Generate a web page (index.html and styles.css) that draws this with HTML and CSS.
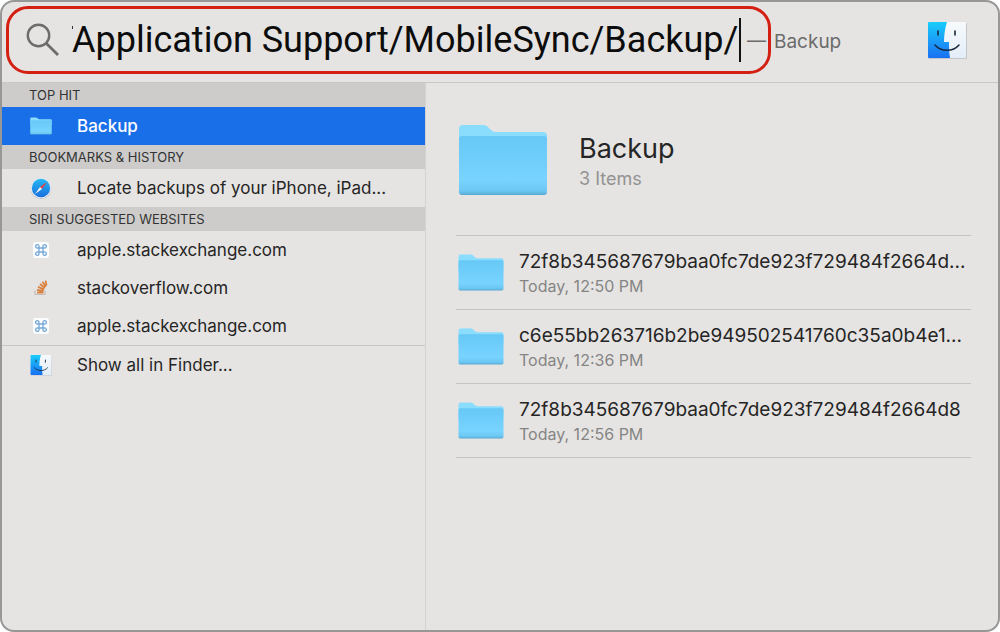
FILE: index.html
```
<!DOCTYPE html>
<html lang="en">
<head>
    <meta charset="utf-8">
    <meta name="viewport" content="width=device-width, initial-scale=1">
    <title>Spotlight</title>
    <link rel="stylesheet" href="styles.css">
</head>
<body>
    <!-- shared icons -->
    <svg class="defs" aria-hidden="true">
        <defs>
            <linearGradient id="folderFront" x1="0" y1="0" x2="0" y2="1">
                <stop offset="0" stop-color="#67c8f6"/>
                <stop offset="0.75" stop-color="#78d3ff"/>
                <stop offset="0.93" stop-color="#6cc7f3"/>
                <stop offset="1" stop-color="#58a9d2"/>
            </linearGradient>
            <linearGradient id="finderBlue" x1="0" y1="0" x2="0" y2="1">
                <stop offset="0" stop-color="#19cdfb"/>
                <stop offset="1" stop-color="#1a70f3"/>
            </linearGradient>
            <linearGradient id="finderWhite" x1="0" y1="0" x2="0" y2="1">
                <stop offset="0" stop-color="#f8fafc"/>
                <stop offset="1" stop-color="#e3edf8"/>
            </linearGradient>
            <linearGradient id="safariBlue" x1="0" y1="0" x2="0" y2="1">
                <stop offset="0" stop-color="#24b8f5"/>
                <stop offset="1" stop-color="#1b6fdd"/>
            </linearGradient>
        </defs>
        <symbol id="folder" viewBox="0 0 90 72">
            <path d="M1 5q0-4 4-4h20c3 0 4 1 6 3l2 2q2 2 5 2h47q4 0 4 4v20H1z" fill="#8addfd"/>
            <rect x="1" y="12" width="88" height="59" rx="3" fill="url(#folderFront)"/>
        </symbol>
        <symbol id="finder" viewBox="0 0 40 38">
            <rect x="1" y="2" width="39" height="36" rx="1" fill="#c3c7cc"/>
            <rect x="1" y="1" width="38" height="36" rx="1" fill="url(#finderWhite)"/>
            <path d="M2 1h18c-2 6-3 13-3 20h5c0 5 0 10 1 16H2q-1 0-1-1V2q0-1 1-1z" fill="url(#finderBlue)"/>
            <path d="M11 10v4M28 10v4" stroke="#17283c" stroke-width="1.6" stroke-linecap="round"/>
            <path d="M8 24c6 7 18 7 24 0" fill="none" stroke="#17283c" stroke-width="1.5" stroke-linecap="round"/>
        </symbol>
        <symbol id="safari" viewBox="0 0 22 22">
            <circle cx="11" cy="11.5" r="10.5" fill="#b9bec5"/>
            <circle cx="11" cy="11" r="10.3" fill="#e6edf3"/>
            <circle cx="11" cy="11" r="9.2" fill="url(#safariBlue)"/>
            <path d="M17 5l-7 5 2 2z" fill="#e8413f"/>
            <path d="M5 17l5-7 2 2z" fill="#f1f5f8"/>
        </symbol>
        <symbol id="command" viewBox="0 0 16 16">
            <rect width="16" height="16" rx="3" fill="#fbfcfd"/>
            <path d="M6 6h4v4H6zM6 6H4.700a1.700 1.700 0 1 1 1.300-1.700zM10 6V4.300A1.700 1.700 0 1 1 11.300 6zM10 10h1.300a1.700 1.700 0 1 1-1.300 1.700zM6 10v1.700A1.700 1.700 0 1 1 4.700 10z" fill="none" stroke="#74a9d8" stroke-width="1.3"/>
        </symbol>
        <symbol id="overflow" viewBox="0 0 16 16">
            <path d="M2 10.500v4h10v-4" fill="none" stroke="#c3bfba" stroke-width="1.200"/>
            <path d="M4 12.500h6.500M4 9.800l6.600 1.200M5 6.800l6 2.600M7 4l5 4M9.500 1.800l3.300 5M12.600.6l.9 5" stroke="#d9813f" stroke-width="1.800"/>
        </symbol>
    </svg>

    <main class="window">
        <header class="searchbar">
            <div class="field">
                <svg class="glass" viewBox="0 0 34 34" aria-hidden="true">
                    <circle cx="12.500" cy="12.500" r="10.700" fill="none" stroke="#6c6c6c" stroke-width="2.400"/>
                    <path d="M20.200 20.200L32 32" stroke="#6c6c6c" stroke-width="2.800"/>
                </svg>
                <span class="clipped"></span>
                <input type="text" class="query" aria-label="Search" value="Application Support/MobileSync/Backup/">
                <span class="caret"></span>
                <span class="dash">—</span>
            </div>
            <span class="hint">Backup</span>
            <svg class="app" aria-hidden="true"><use href="#finder"/></svg>
        </header>

        <div class="content">
            <nav class="results">
                <h2 class="group">TOP HIT</h2>
                <a href="#" class="result selected"><svg class="icon" aria-hidden="true"><use href="#folder"/></svg><span>Backup</span></a>
                <h2 class="group">BOOKMARKS &amp; HISTORY</h2>
                <a href="#" class="result"><svg class="icon" aria-hidden="true"><use href="#safari"/></svg><span>Locate backups of your iPhone, iPad...</span></a>
                <h2 class="group">SIRI SUGGESTED WEBSITES</h2>
                <a href="#" class="result"><svg class="icon small" aria-hidden="true"><use href="#command"/></svg><span>apple.stackexchange.com</span></a>
                <a href="#" class="result"><svg class="icon small" aria-hidden="true"><use href="#overflow"/></svg><span>stackoverflow.com</span></a>
                <a href="#" class="result"><svg class="icon small" aria-hidden="true"><use href="#command"/></svg><span>apple.stackexchange.com</span></a>
                <a href="#" class="result all"><svg class="icon" aria-hidden="true"><use href="#finder"/></svg><span>Show all in Finder...</span></a>
            </nav>

            <section class="preview">
                <div class="summary">
                    <svg class="folder-big" aria-hidden="true"><use href="#folder"/></svg>
                    <div>
                        <h1 class="name">Backup</h1>
                        <p class="count">3 Items</p>
                    </div>
                </div>
                <ul class="files">
                    <li class="file">
                        <svg class="folder" aria-hidden="true"><use href="#folder"/></svg>
                        <div class="info">
                            <p class="title">72f8b345687679baa0fc7de923f729484f2664d...</p>
                            <p class="date">Today, 12:50 PM</p>
                        </div>
                    </li>
                    <li class="file">
                        <svg class="folder" aria-hidden="true"><use href="#folder"/></svg>
                        <div class="info">
                            <p class="title">c6e55bb263716b2be949502541760c35a0b4e1...</p>
                            <p class="date">Today, 12:36 PM</p>
                        </div>
                    </li>
                    <li class="file">
                        <svg class="folder" aria-hidden="true"><use href="#folder"/></svg>
                        <div class="info">
                            <p class="title">72f8b345687679baa0fc7de923f729484f2664d8</p>
                            <p class="date">Today, 12:56 PM</p>
                        </div>
                    </li>
                </ul>
            </section>
        </div>
    </main>
</body>
</html>
```
FILE: styles.css
```
* {
    box-sizing: border-box;
}

body {
    margin: 0;
    background-color: #fff;
    color: #252525;
    font-family: Inter, "Liberation Sans", sans-serif;
}

h1, h2, p, ul {
    margin: 0;
    padding: 0;
    font-weight: 400;
}

.defs {
    position: absolute;
    width: 0;
    height: 0;
}

.window {
    display: flex;
    flex-direction: column;
    min-height: 100vh;
    overflow: hidden;
    background-color: #e5e4e2;
    border: 2px solid #979797;
    border-radius: 14px;
}

/* search bar */
.searchbar {
    display: flex;
    align-items: center;
    padding: 4px 31px 8px 4px;
    border-bottom: 1px solid #c9c8c7;
}

.field {
    display: flex;
    align-items: center;
    width: 765px;
    height: 68px;
    padding: 0 0 0 17px;
    border: 3px solid #d42013;
    border-radius: 22px;
}

.glass {
    flex: none;
    width: 34px;
    height: 34px;
    margin-right: 12px;
}

/* tip of the slash that is scrolled out of the field */
.clipped {
    width: 1px;
    height: 3px;
    margin: 0 -1px 26px 0;
    background-color: #333;
}

.query {
    flex: 1;
    min-width: 0;
    height: 50px;
    padding: 0;
    border: none;
    outline: none;
    background: none;
    color: #0c0c0c;
    font-family: Roboto, "Liberation Sans", sans-serif;
    font-size: 36px;
    font-weight: 400;
}

.caret {
    width: 2px;
    height: 44px;
    background-color: #111;
}

.dash, .hint {
    color: #6b6b6b;
    font-size: 19px;
}

.dash {
    margin: 0 2px 0 6px;
}

.hint {
    margin: 2px 0 0 3px;
}

.app {
    width: 40px;
    height: 38px;
    margin-left: auto;
}

.content {
    display: flex;
    flex: 1;
}

/* result list */
.results {
    width: 424px;
    border-right: 1px solid #d3d2d1;
}

.group {
    height: 24px;
    padding-left: 27px;
    background-color: #cdcccb;
    color: #333;
    font-size: 13px;
    line-height: 24px;
}

.result {
    display: flex;
    align-items: center;
    height: 38px;
    padding-left: 28px;
    color: #252525;
    font-size: 17px;
    text-decoration: none;
}

.icon {
    width: 22px;
    height: 22px;
    margin-right: 25px;
}

.icon.small {
    width: 16px;
    height: 16px;
    margin: 0 28px 0 3px;
}

.selected {
    background-color: #186fe8;
    color: #fff;
    font-weight: 500;
}

.all {
    border-top: 1px solid #c9c8c7;
}

/* preview pane */
.preview {
    flex: 1;
    min-width: 0;
    padding: 41px 27px 0 30px;
}

.summary {
    display: flex;
    align-items: center;
    padding-bottom: 39px;
    border-bottom: 1px solid #c4c3c2;
}

.folder-big {
    width: 90px;
    height: 72px;
    margin: 0 31px 0 2px;
}

.name {
    padding-top: 3px;
    font-size: 27px;
    line-height: 34px;
}

.count {
    color: #929292;
    font-size: 18px;
    line-height: 26px;
}

.files {
    list-style: none;
}

.file {
    display: flex;
    align-items: center;
    height: 74px;
    border-bottom: 1px solid #c4c3c2;
}

.folder {
    flex: none;
    width: 46px;
    height: 37px;
    margin: 0 15px 0 2px;
}

.info {
    min-width: 0;
    padding-top: 2px;
}

.title {
    overflow: hidden;
    font-size: 19px;
    line-height: 24px;
    white-space: nowrap;
}

.date {
    color: #858585;
    font-size: 16px;
    line-height: 24px;
}
```
